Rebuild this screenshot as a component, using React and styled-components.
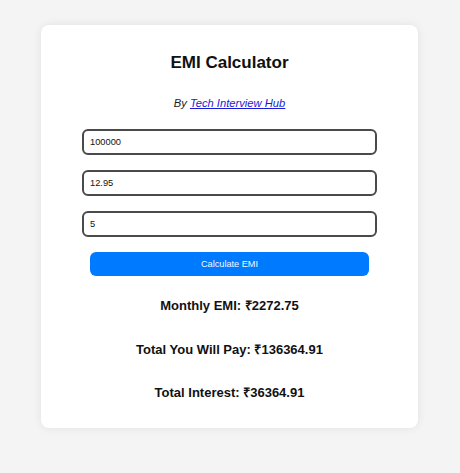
import React, { useState } from 'react'
import styled, { createGlobalStyle } from 'styled-components'

const GlobalStyle = createGlobalStyle`
    body {
        margin: 0;
        background-color: #f4f4f4;
        font-family: "Liberation Sans", Arial, sans-serif;
    }
`;

const Page = styled.div`
    display: flex;
    justify-content: center;
    padding: 25px 1px 0 0;
    min-height: 473px;
    box-sizing: border-box;
`;

const Card = styled.div`
    width: 377px;
    height: 403px;
    box-sizing: border-box;
    background-color: #fff;
    border-radius: 8px;
    box-shadow: 0 0 10px rgba(0, 0, 0, 0.08);
    padding: 28px 41px 27px;
    display: flex;
    flex-direction: column;
    align-items: center;
`;

const Title = styled.h2`
    margin: 0;
    font-size: 17px;
    line-height: 20px;
    font-weight: 700;
    color: #111;
`;

const Byline = styled.p`
    margin: 23px 0 19px;
    font-size: 11.2px;
    line-height: 14px;
    font-style: italic;
    color: #222;

    a {
        color: #1a1ad6;
    }
`;

const Field = styled.input`
    width: 295px;
    height: 26px;
    box-sizing: border-box;
    border: 2px solid #4a4a4a;
    border-radius: 6px;
    padding: 0 6px;
    margin-bottom: 15px;
    font-family: "Liberation Sans", Arial, sans-serif;
    font-size: 9.3px;
    color: #111;
    outline: none;
`;

const Button = styled.button`
    width: 279px;
    height: 24px;
    border: none;
    border-radius: 6px;
    background-color: #007bff;
    color: #f4f8ff;
    font-family: "Liberation Sans", Arial, sans-serif;
    font-size: 9.2px;
    cursor: pointer;
`;

const Result = styled.h3`
    margin: ${(p) => p.$gap}px 0 0;
    font-size: 13px;
    line-height: 16px;
    font-weight: 700;
    color: #111;
`;

export default function App() {
    const [amount, setAmount] = useState('100000')
    const [rate, setRate] = useState('12.95')
    const [years, setYears] = useState('5')
    const [result, setResult] = useState({ emi: '2272.75', total: '136364.91', interest: '36364.91' })

    const calculate = () => {
        const p = parseFloat(amount)
        const r = parseFloat(rate) / 12 / 100
        const n = parseFloat(years) * 12
        const emi = (p * r * Math.pow(1 + r, n)) / (Math.pow(1 + r, n) - 1)
        const total = emi * n
        setResult({ emi: emi.toFixed(2), total: total.toFixed(2), interest: (total - p).toFixed(2) })
    }

    return (
        <Page>
            <GlobalStyle />
            <Card>
                <Title>EMI Calculator</Title>
                <Byline>By <a href="#">Tech Interview Hub</a></Byline>
                <Field value={amount} onChange={(e) => setAmount(e.target.value)} />
                <Field value={rate} onChange={(e) => setRate(e.target.value)} />
                <Field value={years} onChange={(e) => setYears(e.target.value)} />
                <Button onClick={calculate}>Calculate EMI</Button>
                <Result $gap={22}>Monthly EMI: ₹{result.emi}</Result>
                <Result $gap={28}>Total You Will Pay: ₹{result.total}</Result>
                <Result $gap={27}>Total Interest: ₹{result.interest}</Result>
            </Card>
        </Page>
    )
}
